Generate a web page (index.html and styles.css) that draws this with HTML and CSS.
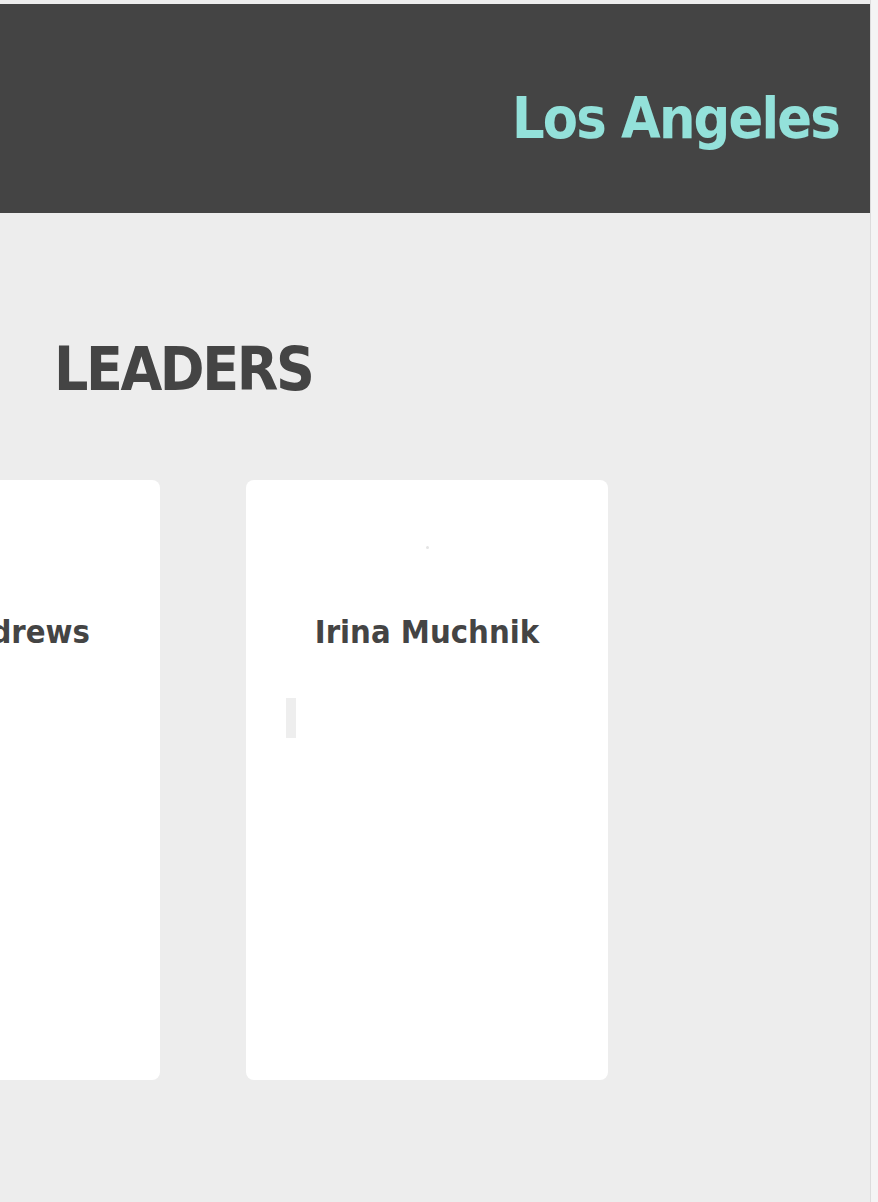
FILE: index.html
```html
<!DOCTYPE html>
<html lang="en">
<head>
<meta charset="utf-8">
<title>Los Angeles Leaders</title>
<link rel="stylesheet" href="styles.css">
</head>
<body>
<div class="viewport">
  <main class="page">
    <header class="topbar">
      <h1 class="city">Los Angeles</h1>
    </header>
    <section class="leaders">
      <h2 class="section-title">LEADERS</h2>
      <div class="track">
        <article class="card">
          <div class="photo"><span class="dot"></span></div>
          <h3 class="name">Andrews</h3>
        </article>
        <article class="card">
          <div class="photo"><span class="dot"></span></div>
          <h3 class="name">Irina Muchnik</h3>
          <div class="bio"><span class="bar"></span></div>
        </article>
      </div>
    </section>
  </main>
  <div class="scrollbar"></div>
</div>
</body>
</html>
```

FILE: styles.css
```css
html, body {
  margin: 0;
  padding: 0;
  height: 100%;
}
body {
  background: #ededed;
  font-family: "DejaVu Sans Condensed", "DejaVu Sans", sans-serif;
  color: #444444;
  overflow: hidden;
}
.viewport {
  display: flex;
  height: 1202px;
}
.page {
  width: 870px;
  flex: none;
  padding-top: 4px;
  overflow: hidden;
}
.topbar {
  background: #444444;
  height: 209px;
  display: flex;
  align-items: center;
  justify-content: flex-end;
  padding-right: 31px;
  box-sizing: border-box;
}
.city {
  margin: 0;
  color: #93e1da;
  font-size: 57px;
  font-weight: bold;
  line-height: 1;
  letter-spacing: -1.8px;
  position: relative;
  top: 10px;
}
.leaders {
  padding-top: 126px;
}
.section-title {
  margin: 0 0 0 54px;
  font-size: 60px;
  font-weight: bold;
  line-height: 1;
  letter-spacing: -2.4px;
  color: #444444;
}
.track {
  display: flex;
  gap: 86px;
  margin-left: -202px;
  margin-top: 81px;
}
.card {
  width: 362px;
  height: 600px;
  flex: none;
  background: #ffffff;
  border-radius: 8px;
  box-sizing: border-box;
  display: flex;
  flex-direction: column;
  align-items: center;
}
.photo {
  height: 132px;
  width: 100%;
  display: flex;
  justify-content: center;
  padding-top: 66px;
  box-sizing: border-box;
}
.dot {
  width: 3px;
  height: 3px;
  border-radius: 50%;
  background: #e4e4e4;
}
.name {
  margin: 0;
  font-size: 32.5px;
  font-weight: bold;
  line-height: 40px;
  color: #444444;
  white-space: nowrap;
}
.card:first-child .name {
  align-self: flex-end;
  margin-right: 70px;
}
.bio {
  align-self: stretch;
  padding: 46px 0 0 40px;
}
.bar {
  display: block;
  width: 10px;
  height: 40px;
  background: #eeeeee;
}
.scrollbar {
  width: 8px;
  flex: none;
  background: #f4f4f4;
  border-left: 1px solid #dcdcdc;
  box-sizing: border-box;
}
```
